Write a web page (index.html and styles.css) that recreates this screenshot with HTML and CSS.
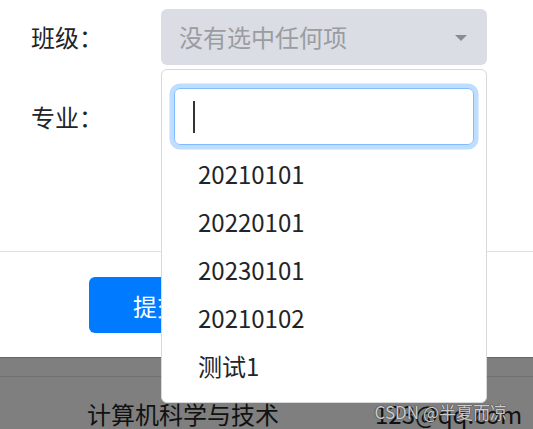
FILE: index.html
```html
<!DOCTYPE html>
<html lang="zh">
<head>
<meta charset="utf-8">
<link rel="stylesheet" href="styles.css">
</head>
<body>
<div class="modal">
  <div class="modal-body">
    <div class="form-row">
      <label class="label">班级：</label>
      <div class="select-wrap">
        <div class="select">
          <span class="placeholder">没有选中任何项</span>
          <span class="caret"></span>
        </div>
        <div class="menu">
          <div class="searchbox">
            <div class="search-input"><span class="cursor"></span></div>
          </div>
          <ul class="options">
            <li>20210101</li>
            <li>20220101</li>
            <li>20230101</li>
            <li>20210102</li>
            <li>测试1</li>
          </ul>
        </div>
      </div>
    </div>
    <div class="form-row">
      <label class="label">专业：</label>
      <div class="select-wrap">
        <div class="select"></div>
      </div>
    </div>
  </div>
  <div class="modal-footer">
    <button class="btn-submit">提交</button>
  </div>
</div>
<div class="backdrop">
  <div class="table-row"></div>
  <div class="table-row cells">
    <span class="cell-major">计算机科学与技术</span>
    <span class="cell-mail">123@qq.com</span>
  </div>
  <div class="watermark">CSDN @半夏而凉</div>
</div>
</body>
</html>
```
FILE: styles.css
```css
* { box-sizing: border-box; }
html, body {
  margin: 0;
  padding: 0;
  height: 429px;
  overflow: hidden;
}
body {
  font-family: "Noto Sans CJK SC", "Noto Sans", sans-serif;
  font-size: 24px;
  line-height: 1.5;
  color: #212529;
  background: #fff;
}
.modal {
  background: #fff;
  height: 357px;
  display: flex;
  flex-direction: column;
}
.modal-body {
  height: 252px;
  padding: 9px 0 0 31px;
  border-bottom: 1px solid #dee2e6;
}
.form-row {
  display: flex;
  align-items: center;
  margin-bottom: 24px;
}
.label {
  width: 130px;
  line-height: 36px;
}
.select-wrap {
  position: relative;
  width: 326px;
}
.select {
  height: 56px;
  background: #dadde3;
  border-radius: 6px;
  display: flex;
  align-items: center;
  justify-content: space-between;
  padding: 0 20px 0 18px;
}
.placeholder {
  color: #9a9ca0;
}
.caret {
  width: 0;
  height: 0;
  border-left: 6.5px solid transparent;
  border-right: 6.5px solid transparent;
  border-top: 6.5px solid #8a8c90;
  margin-top: 2px;
}
.menu {
  position: absolute;
  z-index: 10;
  top: 60px;
  left: 0;
  width: 326px;
  background: #fff;
  border: 1px solid #d9d9d9;
  border-radius: 6px;
  padding: 12px 0;
}
.searchbox {
  padding: 6px 12px 5px 12px;
}
.search-input {
  height: 57px;
  border: 1px solid #80bdff;
  border-radius: 6px;
  box-shadow: 0 0 0 4.5px rgba(0, 123, 255, 0.25);
  display: flex;
  align-items: center;
  padding-left: 18px;
}
.cursor {
  width: 2px;
  height: 32px;
  background: #333;
}
.options {
  list-style: none;
  margin: 0;
  padding: 0;
}
.options li {
  padding: 6px 36px;
  line-height: 36px;
  color: #212529;
}
.modal-footer {
  flex: 1;
  padding: 25px 0 0 89px;
}
.btn-submit {
  width: 136px;
  height: 56px;
  background: #007bff;
  border: none;
  border-radius: 6px;
  color: #fff;
  font-family: inherit;
  font-size: 24px;
  padding: 0;
}
.backdrop {
  position: relative;
  height: 72px;
  background: #7f7f7f;
  border-top: 1px solid #666;
}
.table-row {
  height: 19px;
  border-bottom: 1px solid #6f6f6f;
}
.cells {
  height: auto;
  border: none;
  display: flex;
  padding-top: 19px;
  color: #111;
  line-height: 36px;
}
.cell-major {
  margin-left: 87px;
  width: 288px;
}
.cell-mail {
  white-space: nowrap;
}
.watermark {
  position: absolute;
  right: 26px;
  top: 42px;
  font-size: 17px;
  line-height: 24px;
  color: rgba(255, 255, 255, 0.75);
  text-shadow: 0 0 1px #333, 0 0 1px #333;
  z-index: 20;
}
```
